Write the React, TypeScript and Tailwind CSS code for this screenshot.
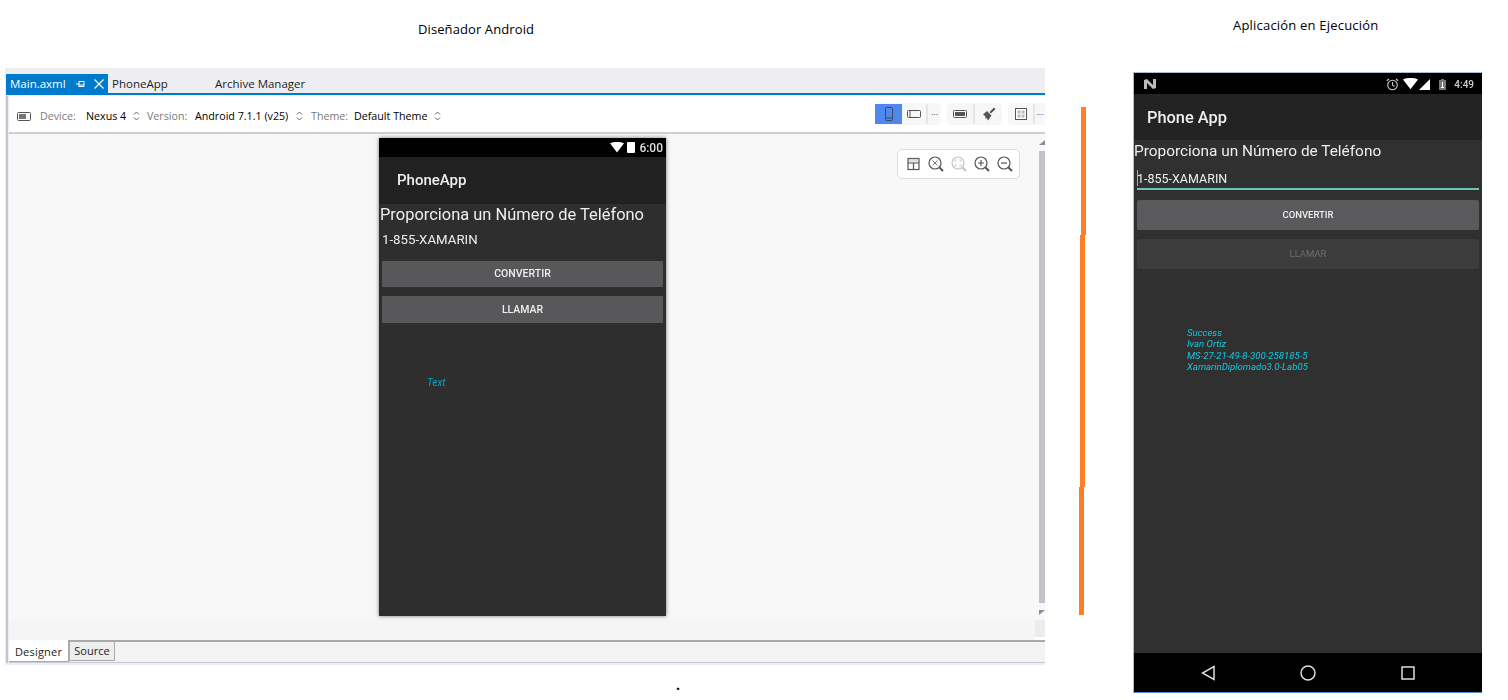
import React from 'react';

const UpDown = () => (
  <svg width="7" height="10" viewBox="0 0 7 10" fill="none" stroke="#666" strokeWidth="1" className="shrink-0">
    <path d="M1 3.500 3.500 1 6 3.500M1 6.500 3.500 9 6 6.500" />
  </svg>
);

const Magnifier = ({ color = '#555', children }: { color?: string; children?: React.ReactNode }) => (
  <svg width="18" height="18" viewBox="0 0 18 18" fill="none" stroke={color} strokeWidth="1.2">
    <circle cx="8" cy="8" r="6" />
    <path d="M12.5 12.5 16 16" strokeWidth="2" />
    {children}
  </svg>
);

function StatusWifi({ size = 14 }: { size?: number }) {
  return (
    <svg width={size} height={size * 0.75} viewBox="0 0 16 12">
      <path d="M0 1.5C4.500 -0.500 11.500 -0.500 16 1.500L8 12Z" fill="#fff" />
    </svg>
  );
}

function DesignerToolbar() {
  return (
    <div className="h-[38px] ml-[1px] pt-[4px] border-b-2 border-[#cfcfcf] bg-white flex items-center pl-[8px] text-[10.700px] font-['Open_Sans',sans-serif]">
      <svg width="14" height="9" viewBox="0 0 14 9" className="mr-[9px]">
        <rect x="0.500" y="0.500" width="13" height="8" rx="1" fill="#fff" stroke="#555" />
        <rect x="2" y="2" width="7" height="5" fill="#777" />
      </svg>
      <span className="text-[#7a7a7a] w-[46px]">Device:</span>
      <span className="text-black w-[47px]">Nexus 4</span>
      <UpDown />
      <span className="text-[#7a7a7a] ml-[7px] w-[48px]">Version:</span>
      <span className="text-black w-[101px]">Android 7.1.1 (v25)</span>
      <UpDown />
      <span className="text-[#7a7a7a] ml-[8px] w-[43px]">Theme:</span>
      <span className="text-black w-[80px]">Default Theme</span>
      <UpDown />

      <div className="ml-auto mt-[-4px] flex items-center gap-[6px]">
        <div className="flex h-[22px] w-[66px] bg-[#f7f7f7] rounded-[4px] items-center">
          <div className="w-[27px] h-[20px] bg-[#5087ec] flex items-center justify-center">
            <svg width="8" height="14" viewBox="0 0 8 14" fill="none" stroke="#3d4a63">
              <rect x="0.500" y="0.500" width="7" height="13" rx="1" />
              <path d="M0.500 11h7" />
            </svg>
          </div>
          <div className="w-[26px] flex justify-center border-r-2 border-[#e6e6e6] h-[20px] items-center">
            <svg width="14" height="8" viewBox="0 0 14 8" fill="none" stroke="#555">
              <rect x="0.500" y="0.500" width="13" height="7" rx="1" />
              <path d="M3 0.500v7" />
            </svg>
          </div>
          <span className="flex-1 text-center text-[9px] leading-none text-[#444]">···</span>
        </div>
        <div className="flex h-[22px] w-[55px] bg-[#f7f7f7] rounded-[4px] items-center">
          <div className="w-[28px] h-[20px] flex justify-center items-center border-r-2 border-[#e6e6e6]">
            <svg width="14" height="8" viewBox="0 0 14 8">
              <rect x="0.500" y="0.500" width="13" height="7" rx="1" fill="#fff" stroke="#555" />
              <rect x="2" y="2" width="10" height="4" fill="#555" />
            </svg>
          </div>
          <div className="flex-1 flex justify-center">
            <svg width="14" height="14" viewBox="0 0 14 14" fill="#555">
              <path d="M1 7.500 5 4l4.500 4.500L6 13.500 4.500 11 3 11.500 3.500 9.500Z" />
              <path d="M7.500 5 12 0.500 13.500 2 9 6.500Z" />
            </svg>
          </div>
        </div>
        <div className="flex h-[22px] w-[37px] bg-[#f7f7f7] rounded-l-[4px] items-center">
          <div className="w-[27px] h-[20px] flex justify-center items-center border-r-2 border-[#e6e6e6]">
            <svg width="12" height="12" viewBox="0 0 12 12">
              <rect x="0.500" y="0.500" width="11" height="11" fill="#fff" stroke="#555" />
              <rect x="2.500" y="2.500" width="3" height="3" fill="#bbb" />
              <rect x="6.500" y="2.500" width="3" height="3" fill="#bbb" />
              <rect x="2.500" y="6.500" width="3" height="3" fill="#bbb" />
              <rect x="6.500" y="6.500" width="3" height="3" fill="#bbb" />
            </svg>
          </div>
          <span className="flex-1 text-center text-[9px] leading-none text-[#444]">···</span>
        </div>
      </div>
    </div>
  );
}

function FloatingTools() {
  return (
    <div className="absolute left-[888px] top-[15px] w-[123px] h-[30px] bg-white border border-[#dddddd] rounded-[5px] flex items-center pl-[7px] gap-[5px]">
      <svg width="18" height="14" viewBox="0 0 18 14" fill="none" stroke="#555" strokeWidth="1.200" className="mr-[-1px]">
        <rect x="3" y="1.500" width="11" height="11" />
        <path d="M3 6h11M8.500 6v6.500" />
        <rect x="3" y="1.500" width="11" height="4.500" fill="#999" stroke="none" opacity="0.300" />
      </svg>
      <Magnifier><path d="M5.500 5.500l5 5M10.500 5.500l-5 5" strokeWidth="0.800" /></Magnifier>
      <Magnifier color="#c4c4c4"><path d="M5 7V5h2M9 5h2v2M11 9v2H9M7 11H5V9" strokeWidth="0.800" /></Magnifier>
      <Magnifier><path d="M5 8h6M8 5v6" /></Magnifier>
      <Magnifier><path d="M5 8h6" /></Magnifier>
    </div>
  );
}

function DesignerPhone() {
  return (
    <div className="w-[287px] h-[478px] mt-[4px] bg-[#2e2e2e] shadow-[0_0_4px_rgba(0,0,0,0.55)] flex flex-col font-['Roboto',sans-serif] text-[#eeeeee] blur-[0.4px]">
      <div className="h-[19px] bg-black flex items-center justify-end pr-[3px] gap-[3px]">
        <StatusWifi />
        <div className="w-[8px] h-[11px] bg-white rounded-[1px]" />
        <span className="text-[12px] font-medium ml-[1px] text-[#ddd]">6:00</span>
      </div>
      <div className="h-[47px] bg-[#212121] flex items-center pl-[18px] text-[15px] font-medium">PhoneApp</div>
      <div className="pl-[1px] mt-[-1px] text-[16.450px] leading-[22px] pt-[1px] text-[#eee]">Proporciona un Número de Teléfono</div>
      <div className="pl-[3px] mt-[3px] text-[13.250px] leading-[22px]">1-855-XAMARIN</div>
      <div className="mx-[3px] mt-[10px] h-[26px] bg-[#58585a] rounded-[1px] flex items-center justify-center text-[10.500px] font-medium">CONVERTIR</div>
      <div className="mx-[3px] mt-[9px] h-[27px] bg-[#58585a] rounded-[1px] flex items-center justify-center text-[10.500px] font-medium">LLAMAR</div>
      <div className="pl-[48px] mt-[52px] text-[10px] italic text-[#0aa6c4]">Text</div>
    </div>
  );
}

function DesignerPanel() {
  return (
    <div className="h-[597px] bg-[#eeeef2] flex flex-col pb-[2px] font-['Open_Sans',sans-serif]">
      <div className="h-[6px]" />
      <div className="h-[19px] ml-[1px] flex items-center text-[11.500px] text-[#222]">
        <div className="w-[102px] h-full bg-[#007acc] text-white flex items-center pl-[4px]">
          <span className="w-[66px]">Main.axml</span>
          <svg width="10" height="8" viewBox="0 0 10 8" fill="none" stroke="#fff" className="mr-[8px]">
            <path d="M0 4h3M3 1v6M3 1.500h5v5H3M3 5h5" />
          </svg>
          <svg width="10" height="10" viewBox="0 0 10 10" fill="none" stroke="#fff" strokeWidth="1.200">
            <path d="M0.500 0.500l9 9M9.500 0.500l-9 9" />
          </svg>
        </div>
        <span className="ml-[4px] w-[103px]">PhoneApp</span>
        <span>Archive Manager</span>
      </div>
      <div className="h-[2px] ml-[1px] bg-[#007acc]" />
      <div className="h-[1px] bg-[#eeeef2]" />
      <div className="flex-1 flex flex-col border-l-2 ml-[1px] border-l-[#c4c4cc] min-h-0">
        <DesignerToolbar />
        <div className="flex-1 ml-[1px] flex min-h-0 relative">
          <div className="flex-1 flex flex-col min-w-0">
            <div className="h-[486px] bg-[#f8f8f8] flex justify-center">
              <div className="ml-[1px]"><DesignerPhone /></div>
            </div>
            <div className="flex-1 bg-[#f5f5f5]" />
          </div>
          <div className="w-[10px] flex flex-col bg-[#f8f8f8]">
            <div className="ml-[4px] mt-[6px] w-0 h-0 border-l-[6px] border-l-transparent border-b-[5px] border-b-[#8a8b9c]" />
            <div className="ml-[4px] mt-[6px] h-[452px] bg-[#c2c3c9]" />
            <div className="ml-[4px] mt-[7px] w-0 h-0 border-r-[6px] border-r-transparent border-t-[5px] border-t-[#8a8b9c]" />
            <div className="mt-[5px] h-[17px] bg-[#ececf0]" />
            <div className="flex-1 bg-white" />
          </div>
          <FloatingTools />
        </div>
        <div className="h-[23px] ml-[1px] bg-[#f3f3f3] border-t-2 border-b border-t-[#aaaaaa] border-b-[#c9c9d6] flex items-start text-[11px] text-[#222]">
          <div className="w-[60px] h-[22px] pt-[3px] bg-white border-r border-b border-[#aaaaaa] tracking-[0.2px] flex items-center justify-center mt-[-2px]">Designer</div>
          <div className="w-[46px] h-[19px] bg-[#eeeeee] border border-t-0 border-[#aaaaaa] flex items-center justify-center">Source</div>
        </div>
      </div>
    </div>
  );
}

function RunningPhone() {
  return (
    <div className="w-[349px] h-[621px] border-l border-t border-b border-[#a9bcdc] border-b-[#5b8ad6] flex flex-col bg-[#303030] font-['Roboto',sans-serif] text-[#eeeeee] blur-[0.3px]">
      <div className="h-[21px] pt-[1px] bg-black flex items-center pl-[10px] pr-[8px] text-[#cfcfcf]">
        <svg width="12" height="10" viewBox="0 0 12 10" fill="#bbb">
          <path d="M0 1 3 0 9 6V0h3v9l-3 1L3 4v6H0Z" />
        </svg>
        <div className="ml-auto flex items-center">
          <svg width="13" height="13" viewBox="0 0 13 13" fill="none" stroke="#ccc" strokeWidth="1.100">
            <circle cx="6.500" cy="7" r="4.800" />
            <path d="M6.500 4v3l2 1.500M0.800 2.800 3 1M12.200 2.800 10 1" />
          </svg>
          <div className="ml-[4px]"><StatusWifi size={15} /></div>
          <svg width="11" height="11" viewBox="0 0 11 11" className="ml-[1px]">
            <path d="M0 11 11 0v11Z" fill="#fff" />
          </svg>
          <svg width="7" height="11" viewBox="0 0 7 11" className="ml-[9px]">
            <rect x="0" y="1" width="7" height="10" fill="#777" />
            <rect x="2" y="0" width="3" height="1" fill="#777" />
            <path d="M3.500 3v5M2 8.500h3" stroke="#fff" strokeWidth="1" />
          </svg>
          <span className="ml-[8px] text-[10px] font-medium">4:49</span>
        </div>
      </div>
      <div className="h-[46px] pt-[2px] bg-[#232323] flex items-center pl-[13px] text-[16.400px] font-medium">Phone App</div>
      <div className="text-[15.400px] leading-[22px]">Proporciona un Número de Teléfono</div>
      <div className="mx-[3px] mt-[6px] h-[22px] pt-[1px] border-b-2 border-[#6fc5b5] text-[12.500px] leading-[19px] relative">
        1-855-XAMARIN
        <span className="absolute left-0 top-[2px] w-[1px] h-[16px] bg-[#6fc5b5]" />
      </div>
      <div className="mx-[3px] mt-[10px] h-[30px] bg-[#5a5a5c] rounded-[2px] flex items-center justify-center text-[9.500px] font-medium">CONVERTIR</div>
      <div className="mx-[3px] mt-[9px] h-[30px] pt-[1px] bg-[#3c3c3c] rounded-[2px] flex items-center justify-center text-[9.500px] text-[#6e6e6e]">LLAMAR</div>
      <div className="pl-[53px] mt-[58px] text-[9.600px] leading-[11.300px] italic text-[#14c8e0]">
        <div>Success</div>
        <div>Ivan Ortiz</div>
        <div>MS-27-21-49-8-300-258185-5</div>
        <div>XamarinDiplomado3.0-Lab05</div>
      </div>
      <div className="flex-1" />
      <div className="h-[39px] bg-black flex items-center">
        <div className="w-[81px] flex justify-end">
          <svg width="14" height="16" viewBox="0 0 14 16" fill="none" stroke="#dddddd" strokeWidth="1.500">
            <path d="M13 1.500v13L1.500 8Z" />
          </svg>
        </div>
        <div className="ml-[85px]">
          <svg width="16" height="16" viewBox="0 0 16 16" fill="none" stroke="#dddddd" strokeWidth="1.500">
            <circle cx="8" cy="8" r="7" />
          </svg>
        </div>
        <div className="ml-[85px]">
          <svg width="14" height="14" viewBox="0 0 14 14" fill="none" stroke="#dddddd" strokeWidth="1.500">
            <rect x="1" y="1" width="12" height="12" />
          </svg>
        </div>
      </div>
    </div>
  );
}

export default function App() {
  return (
    <div className="w-[1508px] h-[700px] bg-white flex overflow-hidden font-['Open_Sans',sans-serif] text-black">
      {/* Diseñador */}
      <div className="ml-[5px] w-[1040px] flex flex-col">
        <div className="h-[68px] pt-[20px] pl-[413px] text-[13px] tracking-[0.1px] leading-[18px]">Diseñador Android</div>
        <DesignerPanel />
        <div className="pl-[671px] mt-[13px] text-[14px] leading-[14px] font-bold">.</div>
      </div>

      {/* Barra naranja */}
      <div className="ml-[34px] w-[7px] pt-[107px] flex flex-col">
        <div className="h-[128px] w-[5px] ml-[2px] bg-[#ff7f27]" />
        <div className="h-[252px] w-[5px] ml-[1px] bg-[#ff7f27]" />
        <div className="h-[128px] w-[5px] bg-[#ff7f27]" />
      </div>

      {/* Aplicación */}
      <div className="ml-[47px] flex flex-col">
        <div className="h-[72px] pt-[16px] pl-[100px] text-[13px] tracking-[0.2px] leading-[18px]">Aplicación en Ejecución</div>
        <RunningPhone />
      </div>
    </div>
  );
}
